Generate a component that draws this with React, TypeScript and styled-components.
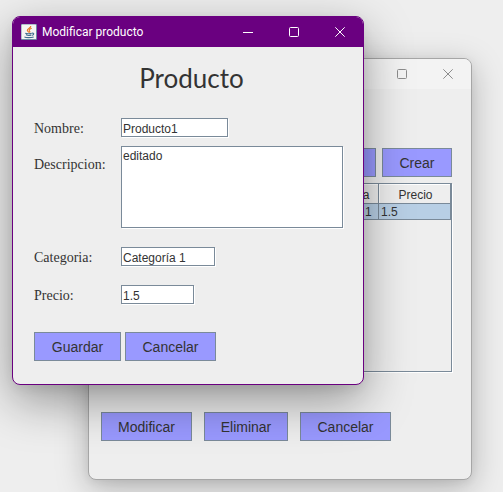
import React from "react";
import styled, { createGlobalStyle } from "styled-components";

const GlobalStyle = createGlobalStyle`
  * { box-sizing: border-box; }
  body { margin: 0; background: #eeeeee; }
`;

const Desktop = styled.div`
  position: relative;
  min-height: 100vh;
  overflow: hidden;
  background: #eeeeee;
  color: #333333;
  font-family: "Liberation Sans", Arial, sans-serif;
`;

const Frame = styled.section`
  position: absolute;
  overflow: hidden;
  border-radius: 8px;
  background: #eeeeee;
`;

const ListFrame = styled(Frame)`
  top: 58px;
  left: 88px;
  right: 31px;
  border: 1px solid #a6a6a6;
  box-shadow: 0 8px 32px rgba(0, 0, 0, 0.26), 0 2px 8px rgba(0, 0, 0, 0.06);
`;

const DialogFrame = styled(Frame)`
  top: 16px;
  left: 12px;
  right: 139px;
  border: 1px solid #6a0080;
  box-shadow: 0 16px 48px rgba(0, 0, 0, 0.38), 0 4px 12px rgba(0, 0, 0, 0.06);
`;

const TitleBar = styled.header<{ $active?: boolean }>`
  display: flex;
  align-items: center;
  height: 30px;
  padding-left: 8px;
  background: ${(p) => (p.$active ? "#6a0080" : "#f3f3f3")};
  color: ${(p) => (p.$active ? "#ffffff" : "#8c8c8c")};
`;

const Caption = styled.h1`
  flex: 1;
  margin: 0 0 0 5px;
  font: 400 12px/18px Roboto, sans-serif;
  white-space: nowrap;
`;

const CaptionButton = styled.button`
  display: flex;
  align-items: center;
  justify-content: center;
  width: 46px;
  height: 30px;
  padding: 0;
  border: 0;
  background: transparent;
  color: inherit;
`;

const PushButton = styled.button<{ $min: number }>`
  min-width: ${(p) => p.$min}px;
  height: 29px;
  padding: 0 12px;
  border: 1px solid #7a8a99;
  background: #9999ff;
  color: #333333;
  font: 14px/16px "Liberation Sans", Arial, sans-serif;
  white-space: nowrap;
`;

const ListBody = styled.div`
  padding: 59px 19px 38px 12px;
`;

const Toolbar = styled.div`
  display: flex;
  justify-content: flex-end;
  gap: 6px;
`;

const ScrollPane = styled.div`
  height: 189px;
  margin-top: 6px;
  border: 1px solid #7a8a99;
  box-shadow: 1px 1px 0 #ffffff;
`;

const Table = styled.table`
  width: 100%;
  table-layout: fixed;
  border-collapse: separate;
  border-spacing: 0;
  font-size: 12px;
  line-height: 14px;
`;

const HeadCell = styled.th`
  height: 20px;
  padding: 2px 0 0 2px;
  border-right: 1px solid #7a8a99;
  border-bottom: 1px solid #7a8a99;
  box-shadow: inset 1px 1px 0 #ffffff;
  font-weight: 400;
`;

const Cell = styled.td`
  height: 16px;
  padding: 1px 0 0 2px;
  border-right: 1px solid #7a8a99;
  border-bottom: 1px solid #7a8a99;
  background: #b8cfe5;
  white-space: nowrap;
`;

const ListActions = styled.div`
  display: flex;
  gap: 12px;
  margin-top: 40px;
`;

const DialogForm = styled.form`
  padding: 10px 20px 23px 21px;
`;

const Heading = styled.h2`
  margin: 0 0 15px;
  padding-left: 6px;
  font: 400 26px/42px Lato, sans-serif;
  height: 46px;
  text-align: center;
`;

const Field = styled.div<{ $gap: number; $top?: boolean }>`
  display: grid;
  grid-template-columns: 87px 1fr;
  align-items: ${(p) => (p.$top ? "start" : "center")};
  margin-top: ${(p) => p.$gap}px;
`;

const Label = styled.label<{ $drop?: boolean }>`
  padding-top: ${(p) => (p.$drop ? 10 : 2)}px;
  font: 14px/18px "Liberation Serif", serif;
`;

const TextInput = styled.input<{ $width: number }>`
  width: ${(p) => p.$width}px;
  height: 19px;
  margin: 0 0 1px;
  padding: 2px 1px 0;
  border: 1px solid #7a8a99;
  border-radius: 0;
  outline: 0;
  background: #ffffff;
  box-shadow: 1px 1px 0 #ffffff;
  color: #333333;
  font: 12px/14px "Liberation Sans", Arial, sans-serif;
`;

const TextArea = styled.textarea`
  display: block;
  width: 100%;
  height: 82px;
  padding: 2px 1px;
  border: 1px solid #7a8a99;
  border-radius: 0;
  outline: 0;
  resize: none;
  background: #ffffff;
  box-shadow: 1px 1px 0 #ffffff;
  color: #333333;
  font: 12px/14px "Liberation Sans", Arial, sans-serif;
`;

const DialogActions = styled.div`
  display: flex;
  gap: 4px;
  margin-top: 27px;
`;

function JavaIcon() {
  return (
    <svg width="16" height="16" viewBox="0 0 16 16" aria-hidden="true">
      <rect width="16" height="16" rx="1" fill="#6d8ba3" />
      <rect x="0.5" y="0.5" width="14.5" height="14.5" rx="0.5" fill="#f5f5f3" />
      <path d="M9.8 2C10.2 4 6.2 4.8 6.3 6.3c0 .9 1.2 1.5 1.5 2.2M10.7 4.3c-2.2.7-3.1 1.8-2.2 2.7.5.5.5 1.1 0 1.7" fill="none" stroke="#e87722" strokeWidth="1.1" />
      <path d="M4.3 9.2c1.2.7 5.2.6 6.4 0M5 10.8c1.3.6 4.2.6 5.5.1M11 9.2c2.3-.6 2.3 1.5.2 2.2M3.4 12.9c1.2 1 6.8 1 9.3 0" fill="none" stroke="#42708f" strokeWidth="1.1" />
    </svg>
  );
}

function WindowButtons() {
  return (
    <>
      <CaptionButton type="button" aria-label="Minimizar">
        <svg width="10" height="10" viewBox="0 0 10 10">
          <path d="M0 5.5h10" stroke="currentColor" />
        </svg>
      </CaptionButton>
      <CaptionButton type="button" aria-label="Maximizar">
        <svg width="10" height="10" viewBox="0 0 10 10">
          <rect x="0.5" y="0.5" width="9" height="9" rx="1" fill="none" stroke="currentColor" />
        </svg>
      </CaptionButton>
      <CaptionButton type="button" aria-label="Cerrar">
        <svg width="10" height="10" viewBox="0 0 10 10">
          <path d="M0.3 0.3l9.4 9.4M9.7 0.3L0.3 9.7" stroke="currentColor" />
        </svg>
      </CaptionButton>
    </>
  );
}

function ProductList() {
  return (
    <ListFrame aria-label="Productos">
      <TitleBar>
        <JavaIcon />
        <Caption />
        <WindowButtons />
      </TitleBar>
      <ListBody>
        <Toolbar>
          <PushButton type="button" $min={80} aria-label="Buscar" />
          <PushButton type="button" $min={70}>Crear</PushButton>
        </Toolbar>
        <ScrollPane>
          <Table>
            <colgroup>
              <col />
              <col />
              <col />
              <col width="72" />
              <col width="72" />
            </colgroup>
            <thead>
              <tr>
                <HeadCell />
                <HeadCell />
                <HeadCell />
                <HeadCell>Categoria</HeadCell>
                <HeadCell>Precio</HeadCell>
              </tr>
            </thead>
            <tbody>
              <tr>
                <Cell />
                <Cell />
                <Cell />
                <Cell>Categoría 1</Cell>
                <Cell>1.5</Cell>
              </tr>
            </tbody>
          </Table>
        </ScrollPane>
        <ListActions>
          <PushButton type="button" $min={91}>Modificar</PushButton>
          <PushButton type="button" $min={84}>Eliminar</PushButton>
          <PushButton type="button" $min={91}>Cancelar</PushButton>
        </ListActions>
      </ListBody>
    </ListFrame>
  );
}

function ProductDialog() {
  return (
    <DialogFrame role="dialog" aria-labelledby="dialog-title">
      <TitleBar $active>
        <JavaIcon />
        <Caption id="dialog-title">Modificar producto</Caption>
        <WindowButtons />
      </TitleBar>
      <DialogForm onSubmit={(e) => e.preventDefault()}>
        <Heading>Producto</Heading>
        <Field $gap={0}>
          <Label htmlFor="nombre">Nombre:</Label>
          <TextInput id="nombre" $width={107} defaultValue="Producto1" />
        </Field>
        <Field $gap={8} $top>
          <Label htmlFor="descripcion" $drop>Descripcion:</Label>
          <TextArea id="descripcion" defaultValue="editado" />
        </Field>
        <Field $gap={19}>
          <Label htmlFor="categoria">Categoria:</Label>
          <TextInput id="categoria" $width={94} defaultValue="Categoría 1" />
        </Field>
        <Field $gap={18}>
          <Label htmlFor="precio">Precio:</Label>
          <TextInput id="precio" $width={73} defaultValue="1.5" />
        </Field>
        <DialogActions>
          <PushButton type="submit" $min={87}>Guardar</PushButton>
          <PushButton type="button" $min={91}>Cancelar</PushButton>
        </DialogActions>
      </DialogForm>
    </DialogFrame>
  );
}

export default function App() {
  return (
    <Desktop>
      <GlobalStyle />
      <ProductList />
      <ProductDialog />
    </Desktop>
  );
}
